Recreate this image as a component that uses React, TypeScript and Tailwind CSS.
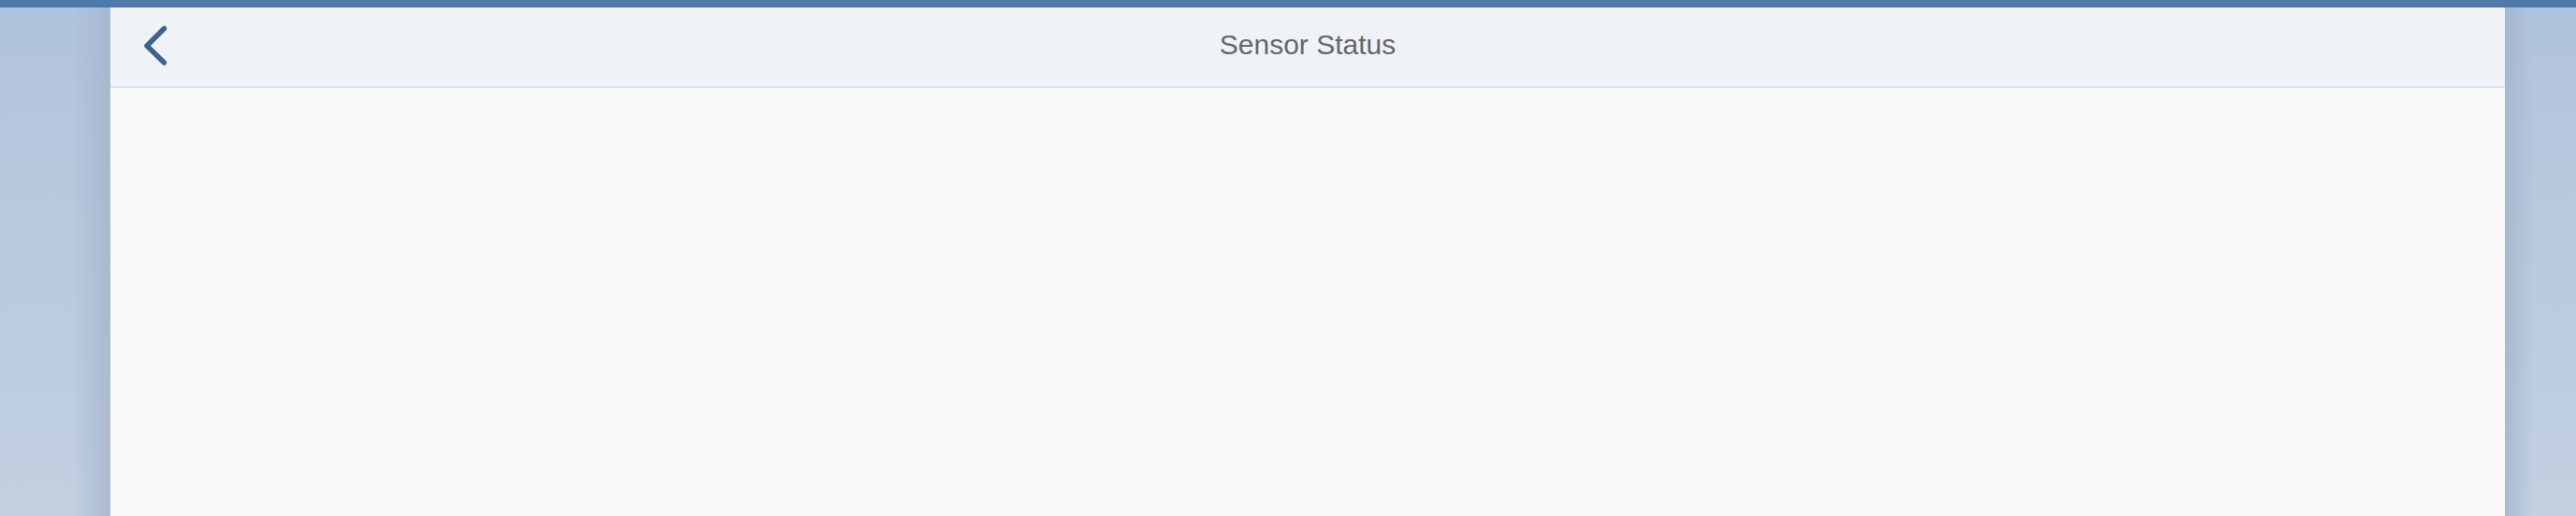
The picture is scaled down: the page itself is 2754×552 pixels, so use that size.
export default function App() {
  return (
    <div className="flex h-[552px] w-full flex-col overflow-hidden bg-gradient-to-b from-[#afc3dc] to-[#c2d1e2] font-['Liberation_Sans',Arial,sans-serif]">
      {/* Shell bar */}
      <div className="h-[8px] w-full shrink-0 bg-[#4f7aa8]" />

      <div className="flex flex-1">
        {/* Side shadows */}
        <div className="w-[118px] shrink-0 bg-gradient-to-r from-transparent via-transparent via-65% to-[#a3b5cd]/80" />

        {/* Page */}
        <div className="flex w-[2560px] shrink-0 flex-col bg-[#fafafa]">
          <header className="relative flex h-[86px] shrink-0 items-center justify-center border-b-2 border-[#d9e3f0] bg-[#eff3f8]">
            <button className="absolute left-[34px] top-[19px] flex h-[44px] w-[30px] items-center justify-center">
              <svg width="28" height="44" viewBox="0 0 28 44" fill="none">
                <path
                  d="M22.5 3.5 L4 22 L22.5 40"
                  stroke="#3a6491"
                  strokeWidth="5.5"
                  strokeLinecap="round"
                  strokeLinejoin="round"
                />
              </svg>
            </button>
            <h1 className="mb-[5px] text-[30px] text-[#666666]">Sensor Status</h1>
          </header>
          <main className="flex-1" />
        </div>

        <div className="flex-1 bg-gradient-to-l from-transparent via-transparent via-60% to-[#a3b5cd]/80" />
      </div>
    </div>
  );
}
